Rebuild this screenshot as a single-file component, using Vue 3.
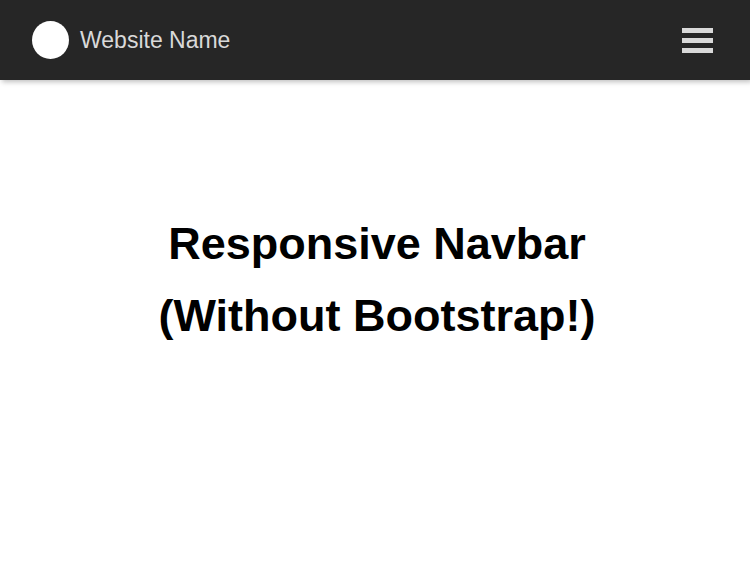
<script setup>
import { ref } from 'vue'

const menuOpen = ref(false)
</script>

<template>
  <header class="navbar">
    <a class="brand" href="#">
      <span class="logo" aria-hidden="true"></span>
      <span>Website Name</span>
    </a>
    <button
      class="toggle"
      type="button"
      aria-label="Toggle navigation"
      :aria-expanded="menuOpen"
      @click="menuOpen = !menuOpen"
    >
      <span class="bar"></span>
      <span class="bar"></span>
      <span class="bar"></span>
    </button>
  </header>
  <main class="content">
    <h1 class="title">Responsive Navbar<br />(Without Bootstrap!)</h1>
  </main>
</template>

<style>
body {
  margin: 0;
  background: #fff;
}
</style>

<style scoped>
.navbar,
.content {
  font-family: "Liberation Sans", Arial, sans-serif;
}

.navbar {
  display: flex;
  align-items: center;
  justify-content: space-between;
  box-sizing: border-box;
  height: 80px;
  padding: 0 37px 0 32px;
  background: #262626;
  box-shadow: 2px 2px 5px rgba(0, 0, 0, 0.25);
}

.brand {
  display: flex;
  align-items: center;
  gap: 11px;
  color: #d9d9d9;
  font-size: 23px;
  line-height: 25px;
  text-decoration: none;
}

.logo {
  width: 37px;
  height: 38px;
  border-radius: 50%;
  background: #fff;
}

.toggle {
  display: flex;
  flex-direction: column;
  gap: 5px;
  padding: 0;
  border: 0;
  background: none;
  cursor: pointer;
}

.bar {
  width: 31px;
  height: 5px;
  background: #d9d9d9;
}

.content {
  padding: 128px 0 0 4px;
}

.title {
  margin: 0;
  color: #000;
  font-size: 45px;
  font-weight: 700;
  line-height: 72px;
  text-align: center;
}
</style>
